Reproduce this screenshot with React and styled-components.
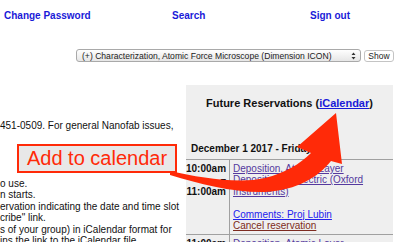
import React from 'react'
import styled, { createGlobalStyle } from 'styled-components'

const GlobalStyle = createGlobalStyle`
  body {
    margin: 0;
    background: #fff;
    font-family: "Liberation Sans", Arial, Helvetica, sans-serif;
  }
`

const Page = styled.div`
  position: relative;
  width: 400px;
  height: 242px;
  overflow: hidden;
  font-size: 10px;
  color: #111;
`

const Nav = styled.nav`
  display: grid;
  grid-template-columns: 168px 138px auto;
  padding: 10px 0 0 4px;
  line-height: 12px;
`

const NavLink = styled.a`
  color: #1a1ad8;
  font-weight: bold;
  font-size: 10px;
  text-decoration: none;
`

const ToolRow = styled.div`
  display: flex;
  justify-content: flex-end;
  align-items: center;
  margin-top: 27px;
  padding-right: 6px;
  gap: 3px;
`

const FakeSelect = styled.div`
  box-sizing: border-box;
  flex: 0 0 285px;
  width: 285px;
  height: 13px;
  display: flex;
  align-items: center;
  padding: 0 4px 0 5px;
  border: 1px solid #a9a9a9;
  border-radius: 3px;
  background: linear-gradient(#fefefe, #e6e6e6);
  color: #222;
  white-space: nowrap;
  overflow: hidden;
`

const SelectText = styled.span`
  flex: 1;
  font-size: 8.6px;
`

const ShowButton = styled.div`
  box-sizing: border-box;
  flex: 0 0 30px;
  height: 12px;
  display: flex;
  align-items: center;
  justify-content: center;
  border: 1px solid #c4c4c4;
  border-radius: 3px;
  background: #fff;
  font-size: 8.5px;
  color: #222;
`

const Main = styled.div`
  display: grid;
  grid-template-columns: 186px 207px;
  margin-top: 23px;
`

const LeftCol = styled.div`
  padding-top: 35px;
  line-height: 11.4px;
  white-space: nowrap;
`

const Para = styled.p`
  margin: 0 0 ${p => p.$gap || 0}px 0;
`

const Panel = styled.div`
  background: #efefef;
  min-height: 160px;
`

const PanelTitle = styled.div`
  padding-top: 12px;
  text-align: center;
  font-weight: bold;
  font-size: 11px;
  line-height: 13px;
  a {
    color: #1a1ad8;
    text-decoration: underline;
  }
`

const DayHead = styled.div`
  margin-top: 33px;
  padding: 0 0 4.6px 5px;
  font-weight: bold;
  line-height: 11.4px;
  white-space: nowrap;
`

const Row = styled.div`
  display: grid;
  grid-template-columns: 44px 1fr;
  border-top: 1px solid #a0a0a0;
  line-height: 11.4px;
`

const TimeCell = styled.div`
  padding: 3px 3px 2.6px 0;
  text-align: right;
  font-weight: bold;
  border-right: 1px solid #a0a0a0;
`

const LinkCell = styled.div`
  padding: 3px 0 2.6px 3px;
`

const Item = styled.a`
  display: block;
  color: ${p => p.$color || '#55399e'};
  text-decoration: underline;
  min-height: 11.4px;
`

const Callout = styled.div`
  position: absolute;
  left: 17px;
  top: 144px;
  box-sizing: border-box;
  width: 160px;
  height: 29px;
  border: 2px solid #ff2a08;
  background: #e8e8e8;
  color: #ff2a08;
  font-size: 20px;
  line-height: 25px;
  text-align: center;
  white-space: nowrap;
`

const ArrowLayer = styled.svg`
  position: absolute;
  left: 0;
  top: 0;
  pointer-events: none;
`

export default function App() {
  return (
    <Page>
      <GlobalStyle />
      <Nav>
        <NavLink href="#">Change Password</NavLink>
        <NavLink href="#">Search</NavLink>
        <NavLink href="#">Sign out</NavLink>
      </Nav>
      <ToolRow>
        <FakeSelect>
          <SelectText>(+) Characterization, Atomic Force Microscope (Dimension ICON)</SelectText>
          <svg width="5" height="8" viewBox="0 0 5 8">
            <path d="M0.5 3 L2.5 0.5 L4.5 3 Z M0.5 5 L2.5 7.5 L4.5 5 Z" fill="#333" />
          </svg>
        </FakeSelect>
        <ShowButton>Show</ShowButton>
      </ToolRow>
      <Main>
        <LeftCol>
          <Para $gap={46.6}>451-0509. For general Nanofab issues,</Para>
          <Para>o use.</Para>
          <Para>n starts.</Para>
          <Para>ervation indicating the date and time slot</Para>
          <Para>cribe" link.</Para>
          <Para>s of your group) in iCalendar format for</Para>
          <Para>ins the link to the iCalendar file.</Para>
        </LeftCol>
        <Panel>
          <PanelTitle>
            Future Reservations (<a href="#">iCalendar</a>)
          </PanelTitle>
          <DayHead>December 1 2017 - Friday</DayHead>
          <Row>
            <TimeCell>
              10:00am<br />–<br />11:00am
            </TimeCell>
            <LinkCell>
              <Item href="#">Deposition, Atomic Layer</Item>
              <Item href="#">Deposition, Dielectric (Oxford Instruments)</Item>
              <Item as="span" />
              <Item href="#" $color="#2222ee">Comments: Proj Lubin</Item>
              <Item href="#" $color="#7d2b20">Cancel reservation</Item>
            </LinkCell>
          </Row>
          <Row>
            <TimeCell>11:00am</TimeCell>
            <LinkCell>
              <Item href="#">Deposition, Atomic Layer</Item>
            </LinkCell>
          </Row>
        </Panel>
      </Main>
      <Callout>Add to calendar</Callout>
      <ArrowLayer width="400" height="242" viewBox="0 0 400 242">
        <path
          d="M170 171 C200 178 240 184 265 178 C285 173 300 164 311 153 L297 147 L336 113 L342 164 L331 161 C318 177 298 190 265 192 C235 193 200 184 170 175 Z"
          fill="#ff2a08"
        />
      </ArrowLayer>
    </Page>
  )
}
